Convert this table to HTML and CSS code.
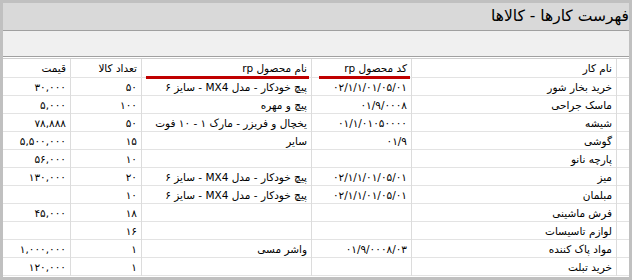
FILE: index.html
```html
<!DOCTYPE html>
<html lang="fa">
<head>
<meta charset="utf-8">
<title>فهرست کارها - کالاها</title>
<link rel="stylesheet" href="styles.css">
</head>
<body>
<div class="window">
  <div class="title">فهرست کارها - کالاها</div>
  <div class="toolbar"></div>
  <div class="spacer"></div>
  <div class="grid">
    <div class="row head">
      <div class="c c-price">قیمت</div>
      <div class="c c-qty">تعداد کالا</div>
      <div class="c c-prod sorted sorted-prod">نام محصول rp</div>
      <div class="c c-code sorted sorted-code">کد محصول rp</div>
      <div class="c c-name">نام کار</div>
      <div class="c c-rh"></div>
    </div>
    <div class="row">
      <div class="c c-price">۳۰,۰۰۰</div><div class="c c-qty">۵۰</div><div class="c c-prod">پیچ خودکار - مدل MX4 - سایز ۶</div><div class="c c-code">۰۲/۱/۱/۰۱/۰۵/۰۱</div><div class="c c-name">خرید بخار شور</div><div class="c c-rh"></div>
    </div>
    <div class="row">
      <div class="c c-price">۵,۰۰۰</div><div class="c c-qty">۱۰۰</div><div class="c c-prod">پیچ و مهره</div><div class="c c-code">۰۱/۹/۰۰۰۸</div><div class="c c-name">ماسک جراحی</div><div class="c c-rh"></div>
    </div>
    <div class="row">
      <div class="c c-price">۷۸,۸۸۸</div><div class="c c-qty">۵۰</div><div class="c c-prod">یخچال و فریزر - مارک ۱ - ۱۰ فوت</div><div class="c c-code">۰۱/۱/۰۱۰۵۰۰۰۰</div><div class="c c-name">شیشه</div><div class="c c-rh"></div>
    </div>
    <div class="row">
      <div class="c c-price">۵,۵۰۰,۰۰۰</div><div class="c c-qty">۱۵</div><div class="c c-prod">سایر</div><div class="c c-code">۰۱/۹</div><div class="c c-name">گوشی</div><div class="c c-rh"></div>
    </div>
    <div class="row">
      <div class="c c-price">۵۶,۰۰۰</div><div class="c c-qty">۱۰</div><div class="c c-prod"></div><div class="c c-code"></div><div class="c c-name">پارچه نانو</div><div class="c c-rh"></div>
    </div>
    <div class="row">
      <div class="c c-price">۱۳۰,۰۰۰</div><div class="c c-qty">۲۰</div><div class="c c-prod">پیچ خودکار - مدل MX4 - سایز ۶</div><div class="c c-code">۰۲/۱/۱/۰۱/۰۵/۰۱</div><div class="c c-name">میز</div><div class="c c-rh"></div>
    </div>
    <div class="row">
      <div class="c c-price"></div><div class="c c-qty">۱۰</div><div class="c c-prod">پیچ خودکار - مدل MX4 - سایز ۶</div><div class="c c-code">۰۲/۱/۱/۰۱/۰۵/۰۱</div><div class="c c-name">مبلمان</div><div class="c c-rh"></div>
    </div>
    <div class="row">
      <div class="c c-price">۴۵,۰۰۰</div><div class="c c-qty">۱۸</div><div class="c c-prod"></div><div class="c c-code"></div><div class="c c-name">فرش ماشینی</div><div class="c c-rh"></div>
    </div>
    <div class="row">
      <div class="c c-price"></div><div class="c c-qty">۱۶</div><div class="c c-prod"></div><div class="c c-code"></div><div class="c c-name">لوازم تاسیسات</div><div class="c c-rh"></div>
    </div>
    <div class="row">
      <div class="c c-price">۱,۰۰۰,۰۰۰</div><div class="c c-qty">۱</div><div class="c c-prod">واشر مسی</div><div class="c c-code">۰۱/۹/۰۰۰۸/۰۳</div><div class="c c-name">مواد پاک کننده</div><div class="c c-rh"></div>
    </div>
    <div class="row">
      <div class="c c-price">۱۲۰,۰۰۰</div><div class="c c-qty">۱</div><div class="c c-prod"></div><div class="c c-code"></div><div class="c c-name">خرید تبلت</div><div class="c c-rh"></div>
    </div>
  </div>
</div>
</body>
</html>
```
FILE: styles.css
```css
html, body {
  margin: 0;
  padding: 0;
  background: #c0c0c0;
}
.window {
  width: 632px;
  height: 280px;
  box-sizing: border-box;
  border: 3px solid #c0c0c0;
  display: flex;
  flex-direction: column;
  font-family: "DejaVu Sans", sans-serif;
  color: #000;
  overflow: hidden;
}
.title {
  direction: rtl;
  height: 27px;
  background: #d9d9d9;
  border-bottom: 1px solid #a0a0a0;
  font-size: 15.5px;
  line-height: 27px;
  text-align: right;
  white-space: nowrap;
}
.toolbar {
  height: 25px;
  background: #f0f0f0;
  border-bottom: 1px solid #a0a0a0;
}
.spacer {
  height: 1px;
  background: #ffffff;
  border-bottom: 1px solid #cfcfcf;
}
.grid {
  flex: 1;
  background: #ffffff;
  display: flex;
  flex-direction: column;
  font-size: 10.5px;
}
.row {
  display: grid;
  grid-template-columns: 68px 71px 170px 100px 205px 12px;
  height: 18px;
  border-bottom: 1px solid #e3e3e3;
  box-sizing: border-box;
}
.row.head {
  height: 19px;
}
.c {
  position: relative;
  direction: rtl;
  border-right: 1px solid #dcdcdc;
  text-align: right;
  padding: 0 4px 0 2px;
  line-height: 18px;
  white-space: nowrap;
  overflow: visible;
}
.c-rh {
  border-right: none;
}
.sorted::after {
  content: "";
  position: absolute;
  bottom: -2px;
  height: 3px;
  background: #c00000;
}
.sorted-prod::after {
  left: 4px;
  right: 2px;
}
.sorted-code::after {
  left: 7px;
  right: 1px;
}
```
